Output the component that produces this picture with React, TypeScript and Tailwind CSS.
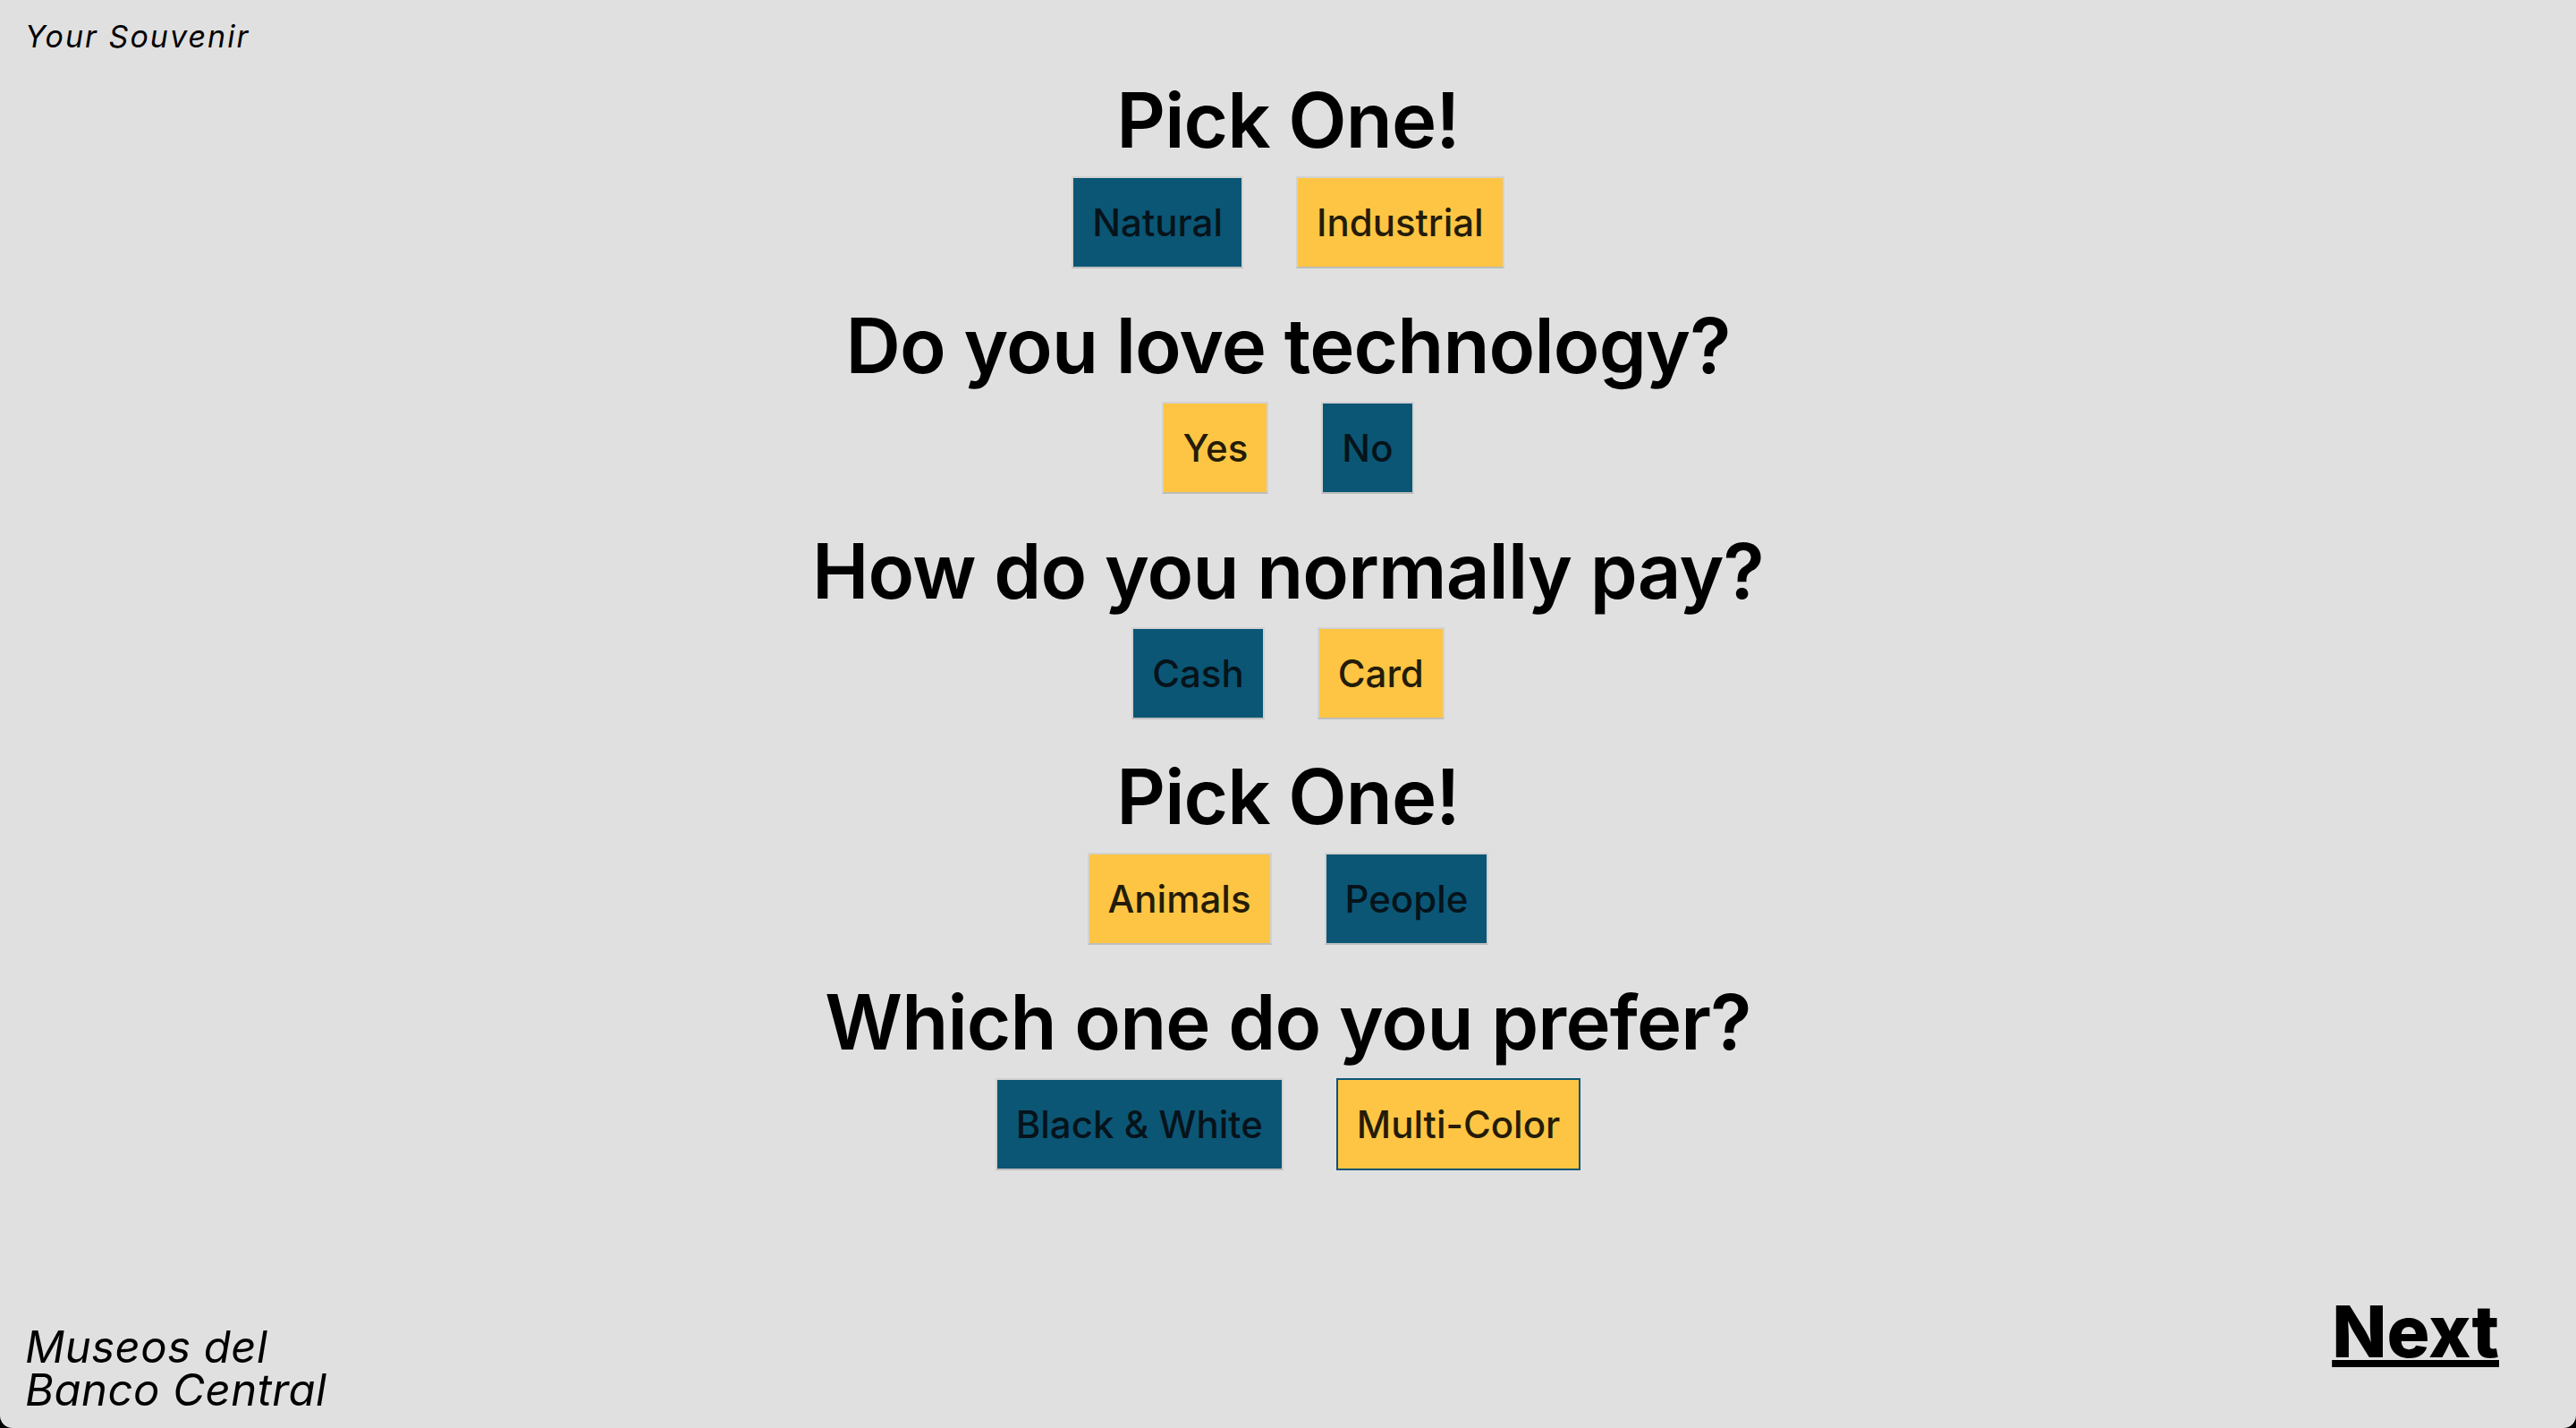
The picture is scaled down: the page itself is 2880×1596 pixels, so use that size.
import React from 'react';

type Choice = { label: string; tone: 'blue' | 'yellow'; selected?: boolean };

const questions: { title: string; choices: Choice[] }[] = [
  { title: 'Pick One!', choices: [{ label: 'Natural', tone: 'blue' }, { label: 'Industrial', tone: 'yellow' }] },
  { title: 'Do you love technology?', choices: [{ label: 'Yes', tone: 'yellow' }, { label: 'No', tone: 'blue' }] },
  { title: 'How do you normally pay?', choices: [{ label: 'Cash', tone: 'blue' }, { label: 'Card', tone: 'yellow' }] },
  { title: 'Pick One!', choices: [{ label: 'Animals', tone: 'yellow' }, { label: 'People', tone: 'blue' }] },
  {
    title: 'Which one do you prefer?',
    choices: [
      { label: 'Black & White', tone: 'blue' },
      { label: 'Multi-Color', tone: 'yellow', selected: true },
    ],
  },
];

const font = { fontFamily: 'Inter, "Noto Sans", sans-serif' };

const ChoiceButton = ({ choice }: { choice: Choice }) => {
  const base =
    choice.tone === 'blue' ? 'bg-[#0b5675] text-[#06131a]' : 'bg-[#fdc543] text-[#241c08]';
  const border = choice.selected
    ? 'border-2 border-[#0b5675]'
    : 'border-2 border-[#d2d2d2] border-b-[#bdbdbd]';
  return (
    <button
      className={`${base} ${border} h-[103px] px-[21px] text-[42px] font-medium leading-none`}
      style={font}
    >
      {choice.label}
    </button>
  );
};

export default function App() {
  return (
    <div className="bg-black">
      <div
        className="flex h-screen w-full flex-col overflow-hidden rounded-b-[14px] bg-[#e0e0e0] text-black"
        style={font}
      >
        <header className="h-[92px] pl-[28px] pt-[24px]">
          <span className="text-[34px] italic leading-none tracking-[0.06em]">Your Souvenir</span>
        </header>

        <main className="flex flex-col items-center">
          {questions.map((q, i) => (
            <section key={i} className="mb-[44px] flex flex-col items-center">
              <h2 className="text-[85px] font-semibold leading-none tracking-[-0.01em]">{q.title}</h2>
              <div className="mt-[20px] flex gap-[59px]">
                {q.choices.map((c) => (
                  <ChoiceButton key={c.label} choice={c} />
                ))}
              </div>
            </section>
          ))}
        </main>

        <footer className="mt-auto flex items-end justify-between pl-[28px] pr-[86px]">
          <div className="pb-[18px] text-[49px] italic leading-[48px] tracking-[0.01em]">
            <div>Museos del</div>
            <div>Banco Central</div>
          </div>
          <a
            href="#"
            className="mb-[68px] text-[80px] font-extrabold leading-none underline decoration-[8px] underline-offset-[3px]"
          >
            Next
          </a>
        </footer>
      </div>
    </div>
  );
}
